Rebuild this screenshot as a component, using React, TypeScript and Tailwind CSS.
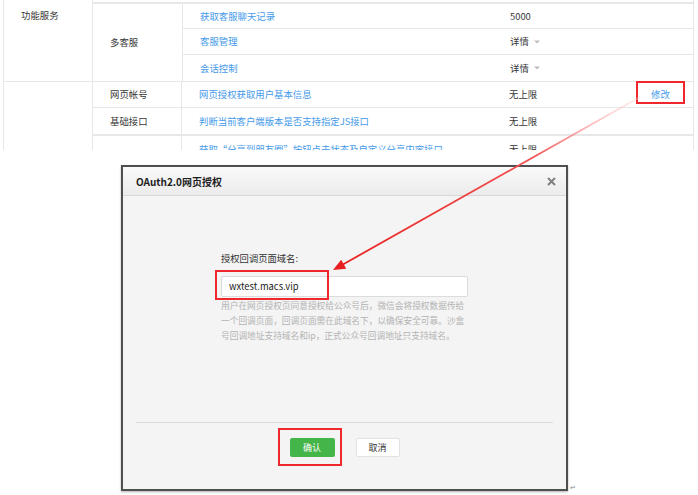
import React from 'react';

const line = 'border-[#e7e7e7]';

const groupRows = [
  { name: '获取客服聊天记录', value: '5000', caret: false, h: 'h-[25px] border-b' },
  { name: '客服管理', value: '详情', caret: true, h: 'h-[26px] border-b' },
  { name: '会话控制', value: '详情', caret: true, h: 'flex-1' },
];

const plainRows = [
  { group: '网页帐号', name: '网页授权获取用户基本信息', value: '无上限', action: '修改', h: 'h-[26px] border-b' },
  { group: '基础接口', name: '判断当前客户端版本是否支持指定JS接口', value: '无上限', action: '', h: 'h-[28px] border-b-2' },
  { group: '', name: '获取“分享到朋友圈”按钮点击状态及自定义分享内容接口', value: '无上限', action: '', h: 'h-[26px]' },
];

function Caret() {
  return (
    <svg width="6" height="4" viewBox="0 0 6 4" className="ml-[5px]">
      <path d="M0 0.5h6L3 3.5z" fill="#bdbdbd" />
    </svg>
  );
}

function Cells({ name, value, caret, action }: { name: string; value: string; caret?: boolean; action?: string }) {
  return (
    <>
      <div className="flex w-[309px] items-center pl-[17px] text-[#459ae9] whitespace-nowrap">{name}</div>
      <div className="flex w-[128px] items-center pl-[18px]">
        {value}
        {caret && <Caret />}
      </div>
      <div className="flex flex-1 items-center pl-[32px] text-[#459ae9]">{action}</div>
    </>
  );
}

function ServiceTable() {
  return (
    <div className={`ml-[3px] h-[150px] w-[691px] overflow-hidden border-x ${line} text-[9.4px] leading-[13px] text-[#353535]`}>
      <div className={`flex h-[82px] border-b ${line}`}>
        <div className="w-[88px] pl-[17px] pt-[9px]">功能服务</div>
        <div className={`flex flex-1 flex-col border-l ${line} pt-[2px]`}>
          <div className={`flex flex-1 border-t-2 ${line}`}>
            <div className="flex w-[89px] items-center pl-[17px]">多客服</div>
            <div className={`flex flex-1 flex-col border-l ${line}`}>
              {groupRows.map((r) => (
                <div key={r.name} className={`flex ${r.h} ${line}`}>
                  <Cells name={r.name} value={r.value} caret={r.caret} />
                </div>
              ))}
            </div>
          </div>
        </div>
      </div>
      <div className="flex">
        <div className="w-[88px]" />
        <div className={`flex flex-1 flex-col border-l ${line}`}>
          {plainRows.map((r) => (
            <div key={r.name} className={`flex ${r.h} ${line}`}>
              <div className={`flex w-[89px] items-center border-r ${line} pl-[17px]`}>{r.group}</div>
              <Cells name={r.name} value={r.value} action={r.action} />
            </div>
          ))}
        </div>
      </div>
    </div>
  );
}

function OAuthDialog() {
  return (
    <div className="ml-[121px] mt-[15px] flex items-end">
      <div className="flex h-[326px] w-[447px] flex-col border-2 border-[#4f4f4f] bg-[#f4f4f4] shadow-[0_1px_2px_rgba(0,0,0,0.3)]">
        <div className="flex h-[29px] items-center justify-between border-b border-[#d8d8d8] bg-gradient-to-b from-[#fafafa] to-[#ebebeb] pl-[13px] pr-[10px]">
          <span className="text-[10px] font-bold text-[#1f1f1f]">OAuth2.0网页授权</span>
          <svg width="9" height="9" viewBox="0 0 9 9">
            <path d="M1 1l7 7M8 1L1 8" stroke="#808080" strokeWidth="2" />
          </svg>
        </div>
        <div className="flex flex-1 flex-col">
          <div className="mx-auto mt-[56px] w-[247px] flex-1">
            <div className="text-[9.3px] leading-[13px] text-[#333]">授权回调页面域名:</div>
            <div className="mt-[11px] flex h-[21px] items-center rounded-[2px] border border-[#dcdcdc] bg-white px-[7px] text-[9.4px] text-[#222]">
              wxtest.macs.vip
            </div>
            <div className="mt-[1px] whitespace-nowrap text-[8.7px] leading-[15px] text-[#b3b3b3]">
              <div>用户在网页授权页同意授权给公众号后，微信会将授权数据传给</div>
              <div>一个回调页面，回调页面需在此域名下，以确保安全可靠。沙盒</div>
              <div>号回调地址支持域名和ip，正式公众号回调地址只支持域名。</div>
            </div>
          </div>
          <div className="mx-[13px] flex justify-center gap-[21px] border-t border-[#dadada] pb-[32px] pt-[15px]">
            <button className="h-[19px] w-[45px] rounded-[2px] bg-[#44b549] text-[9px] text-white">确认</button>
            <button className="h-[19px] w-[44px] rounded-[2px] border border-[#e2e2e2] bg-white text-[9px] text-[#333]">取消</button>
          </div>
        </div>
      </div>
      <span className="ml-[2px] text-[7px] leading-none text-[#888]">↵</span>
    </div>
  );
}

function Annotations() {
  return (
    <>
      <div className="absolute left-[636px] top-[81px] h-[23px] w-[49px] border-2 border-[#f0282d]" />
      <div className="absolute left-[215px] top-[270px] h-[30px] w-[114px] border-2 border-[#f0282d]" />
      <div className="absolute left-[278px] top-[428px] h-[38px] w-[64px] border-2 border-[#f0282d]" />
      <svg className="pointer-events-none absolute inset-0" width="698" height="495">
        <defs>
          <linearGradient id="arrowFade" gradientUnits="userSpaceOnUse" x1="640" y1="97" x2="333" y2="270">
            <stop offset="0" stopColor="#ffd6d6" stopOpacity="0.4" />
            <stop offset="0.35" stopColor="#f25050" />
            <stop offset="1" stopColor="#e8201f" />
          </linearGradient>
        </defs>
        <line x1="640" y1="97" x2="342" y2="265" stroke="url(#arrowFade)" strokeWidth="1.8" />
        <path d="M333 270L346.2 268.8L341.2 259.8Z" fill="#e8201f" />
      </svg>
    </>
  );
}

export default function App() {
  return (
    <div className="relative h-[495px] w-[698px] overflow-hidden bg-white font-['Noto_Sans_CJK_SC','Noto_Sans',sans-serif]">
      <ServiceTable />
      <OAuthDialog />
      <Annotations />
    </div>
  );
}
